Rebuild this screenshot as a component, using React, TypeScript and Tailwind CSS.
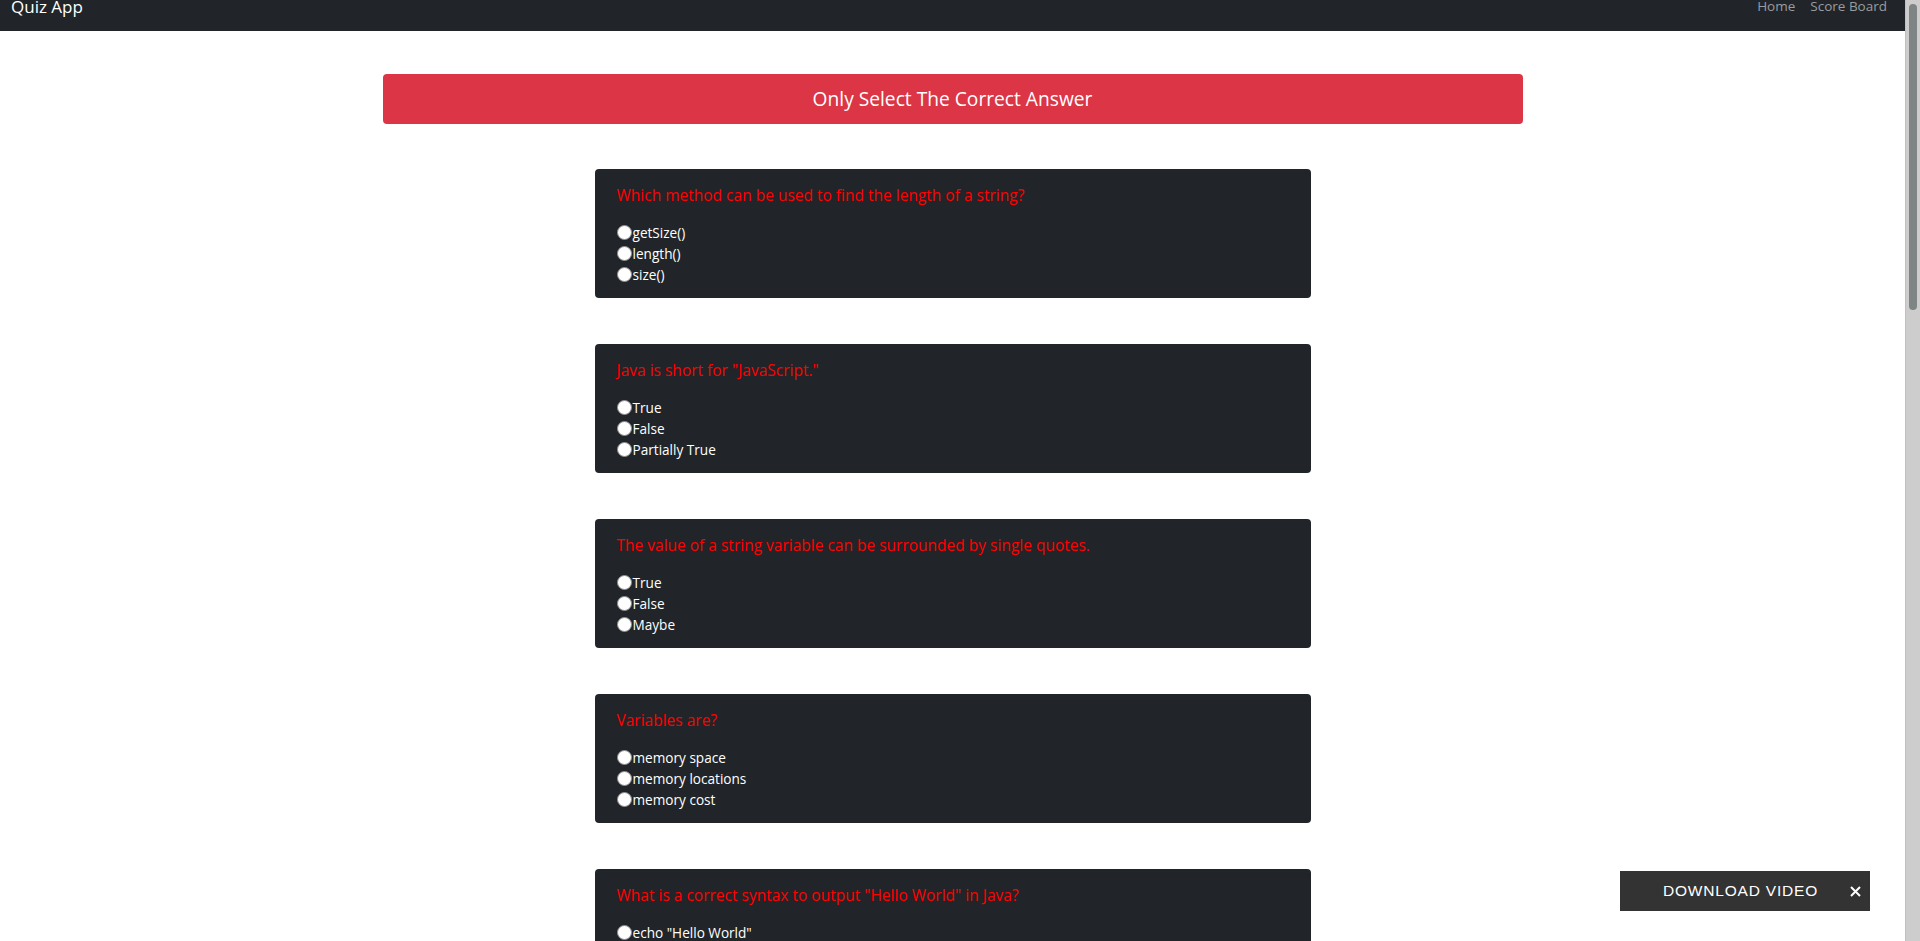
import { useState } from 'react'

interface Question {
  text: string
  options: string[]
}

const questions: Question[] = [
  {
    text: 'Which method can be used to find the length of a string?',
    options: ['getSize()', 'length()', 'size()'],
  },
  { text: 'Java is short for "JavaScript."', options: ['True', 'False', 'Partially True'] },
  {
    text: 'The value of a string variable can be surrounded by single quotes.',
    options: ['True', 'False', 'Maybe'],
  },
  { text: 'Variables are?', options: ['memory space', 'memory locations', 'memory cost'] },
  {
    text: 'What is a correct syntax to output "Hello World" in Java?',
    options: ['echo "Hello World"', 'System.out.println("Hello World");', 'print ("Hello World");'],
  },
  {
    text: 'How do you create a variable with the numeric value 5?',
    options: ['int x = 5;', 'num x = 5', 'x = 5;'],
  },
  {
    text: 'How do you create a variable with the floating number 2.8?',
    options: ['float x = 2.8f;', 'byte x = 2.8f', 'int x = 2.8f;'],
  },
  {
    text: 'Which data type is used to create a variable that should store text?',
    options: ['String', 'myString', 'Txt'],
  },
  {
    text: 'How do you insert COMMENTS in Java code?',
    options: ['// This is a comment', '# This is a comment', '/* This is a comment'],
  },
  {
    text: 'Which operator is used to add together two values?',
    options: ['The + sign', 'The * sign', 'The & sign'],
  },
  { text: 'Which operator can be used to compare two values?', options: ['==', '<>', '><'] },
  {
    text: 'To declare an array in Java, define the variable type with:',
    options: ['[]', '{}', '()'],
  },
  { text: 'Array indexes start with:', options: ['0', '1', '-1'] },
  { text: 'How do you create a method in Java?', options: ['methodName()', 'methodName.', '(methodName)'] },
  { text: 'How do you call a method in Java?', options: ['methodName();', 'methodName;', '(methodName);'] },
  { text: 'Which keyword is used to create a class in Java?', options: ['class', 'className', 'MyClass'] },
]

function QuestionCard({ q, index }: { q: Question; index: number }) {
  const [picked, setPicked] = useState<string | null>(null)

  return (
    <div className="w-[716px] mx-auto bg-[#212529] rounded-[4px] px-[22px] pt-[16px] pb-[13px]">
      <h6 className="text-[15.5px] leading-[20px] text-[#ff0000] mb-[17px]">{q.text}</h6>
      {q.options.map((opt) => (
        <label key={opt} className="flex items-center gap-[1px] text-[13.6px] leading-[21px] text-white">
          <input
            type="radio"
            name={`q${index}`}
            className="appearance-none m-0 w-[15px] h-[15px] shrink-0 rounded-full bg-white border border-[#8d8d8d] checked:border-[4px] checked:border-[#0d6efd]"
            checked={picked === opt}
            onChange={() => setPicked(opt)}
          />
          {opt}
        </label>
      ))}
    </div>
  )
}

export default function App() {
  return (
    <div className="h-screen flex bg-white font-['Open_Sans',sans-serif]">
      <div className="flex-1 overflow-y-auto [scrollbar-width:none]">
        <nav className="h-[31px] bg-[#212529] flex items-start justify-between pl-[11px] pr-[18px]">
          <a href="#" className="text-[17px] leading-[14px] text-white">
            Quiz App
          </a>
          <div className="flex gap-[15px] text-[13.5px] leading-[13px] text-[#9a9c9e]">
            <a href="#">Home</a>
            <a href="#">Score Board</a>
          </div>
        </nav>

        <main className="pt-[43px] pb-[45px]">
          <div className="w-[1140px] mx-auto h-[50px] bg-[#dc3545] rounded-[4px] flex items-center justify-center text-white text-[19.2px]">
            Only Select The Correct Answer
          </div>

          <div className="mt-[45px] flex flex-col gap-[46px]">
            {questions.map((q, i) => (
              <QuestionCard key={q.text} q={q} index={i} />
            ))}
          </div>
        </main>
      </div>

      {/* window scrollbar as it shows in the screenshot */}
      <div className="w-[15px] h-full shrink-0 bg-[#cdcdcd] border-l border-[#c3bfbb]">
        <div className="mt-[4px] ml-[3px] w-[8px] h-[306px] rounded-full bg-[#7f8584]" />
      </div>

      <div className="fixed right-[50px] bottom-[30px] w-[250px] h-[40px] bg-[#333333] flex items-center justify-between pl-[43px] pr-[9px] font-['Liberation_Sans',Arial,sans-serif] text-[15.5px] tracking-[0.8px] text-white">
        <span>DOWNLOAD VIDEO</span>
        <svg width="11" height="11" viewBox="0 0 11 11" className="block">
          <path d="M1 1L10 10M10 1L1 10" stroke="white" strokeWidth="2" />
        </svg>
      </div>
    </div>
  )
}
